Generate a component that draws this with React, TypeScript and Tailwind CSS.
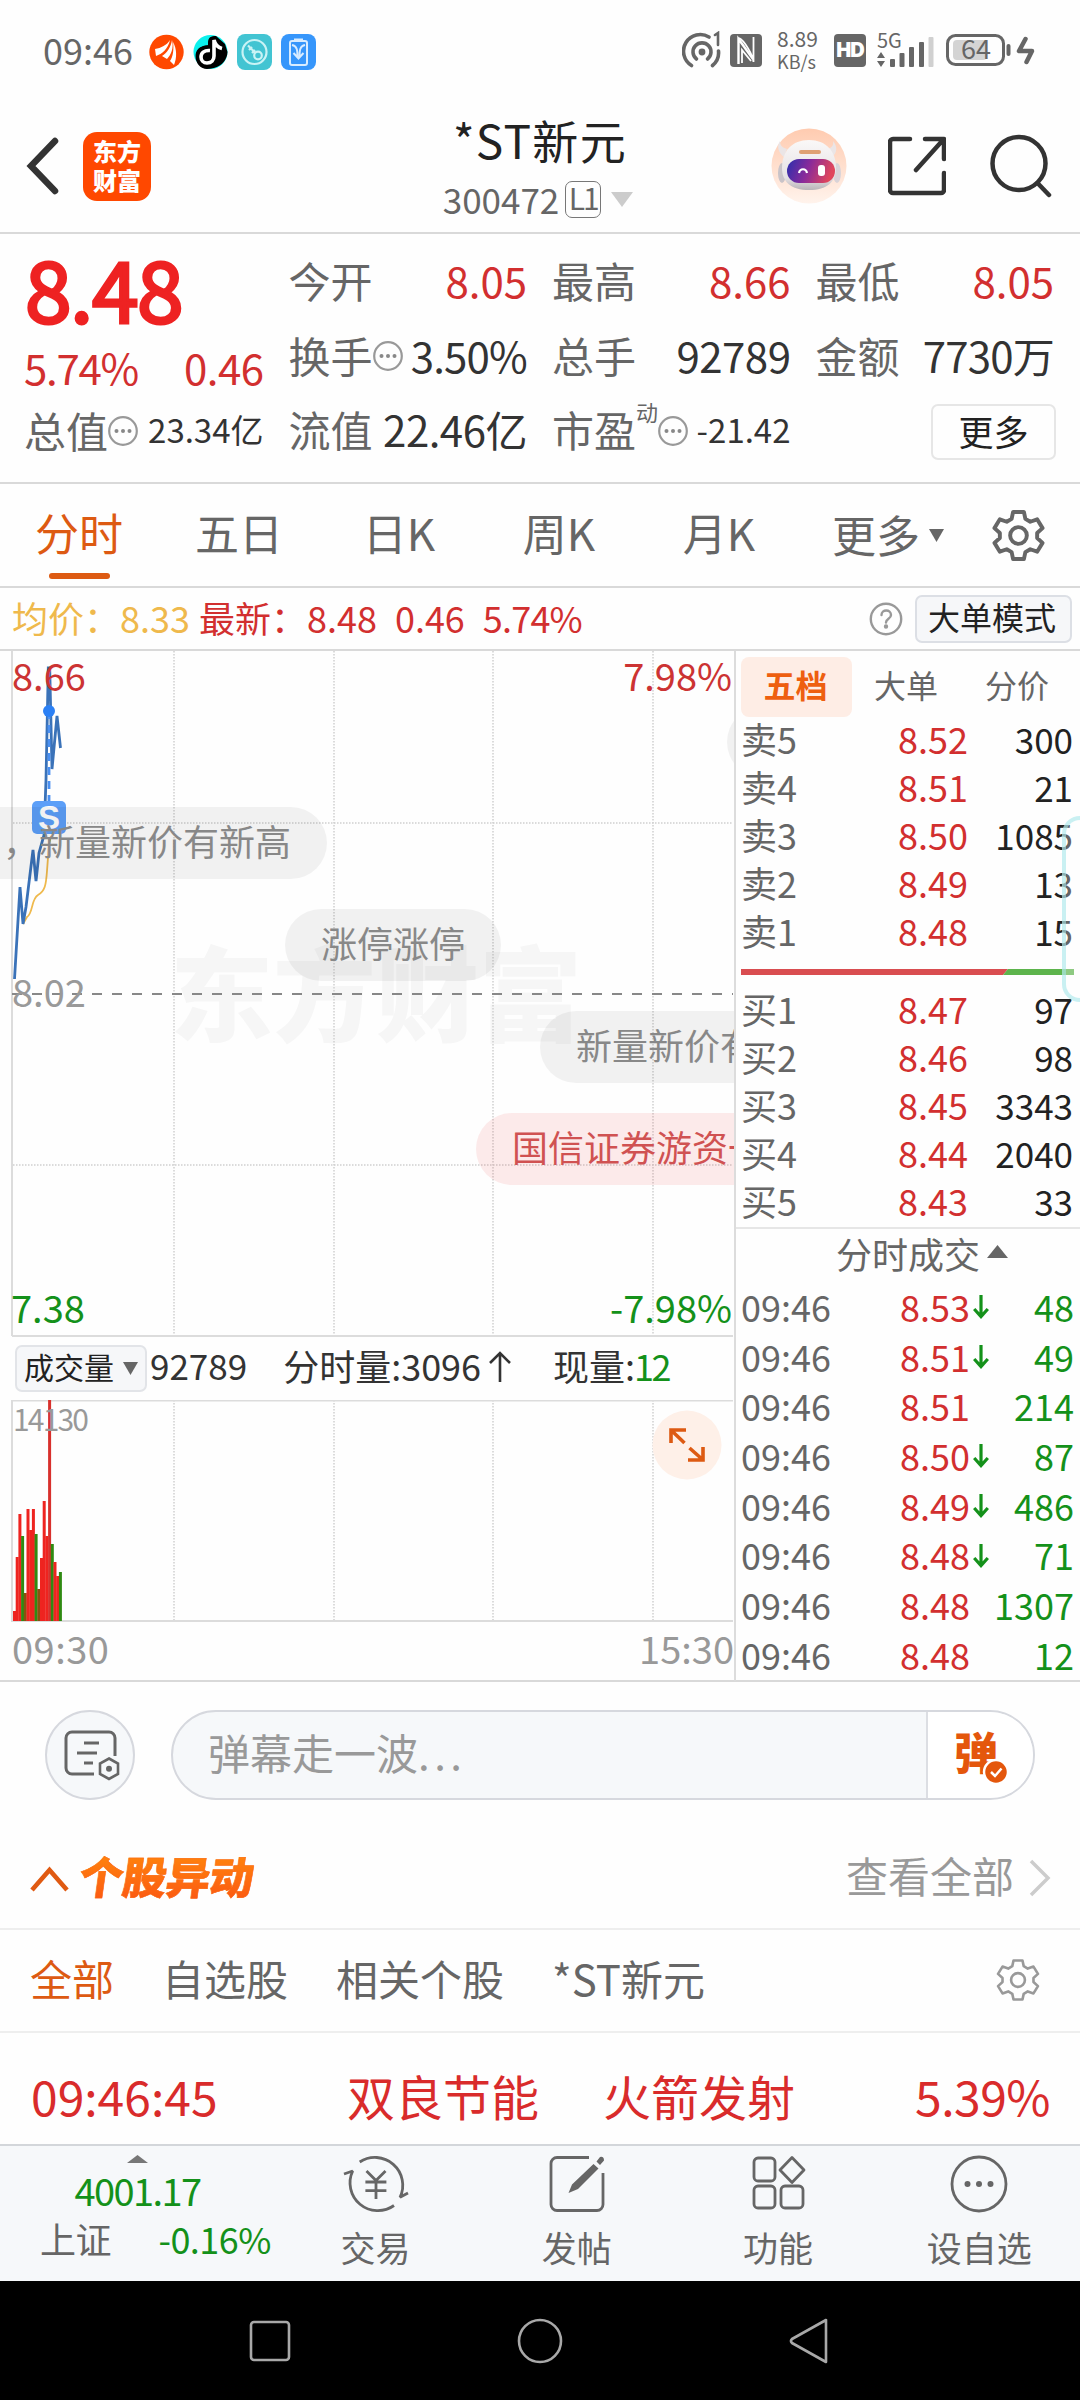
import React from 'react';

type Level = { label: string; price: string; qty: string };
type Tick = { price: string; down: boolean; qty: string };
type VolumeBar = { top: number; color: string };

const sells: Level[] = [
  { label: '卖5', price: '8.52', qty: '300' },
  { label: '卖4', price: '8.51', qty: '21' },
  { label: '卖3', price: '8.50', qty: '1085' },
  { label: '卖2', price: '8.49', qty: '13' },
  { label: '卖1', price: '8.48', qty: '15' },
];

const buys: Level[] = [
  { label: '买1', price: '8.47', qty: '97' },
  { label: '买2', price: '8.46', qty: '98' },
  { label: '买3', price: '8.45', qty: '3343' },
  { label: '买4', price: '8.44', qty: '2040' },
  { label: '买5', price: '8.43', qty: '33' },
];

const ticks: Tick[] = [
  { price: '8.53', down: true, qty: '48' },
  { price: '8.51', down: true, qty: '49' },
  { price: '8.51', down: false, qty: '214' },
  { price: '8.50', down: true, qty: '87' },
  { price: '8.49', down: true, qty: '486' },
  { price: '8.48', down: true, qty: '71' },
  { price: '8.48', down: false, qty: '1307' },
  { price: '8.48', down: false, qty: '12' },
];

const RED = '#ee2420';
const GREEN = '#2f8a12';
const MIXED = '#8a5010';

const volumeBars: VolumeBar[] = [
  { top: 211, color: RED },
  { top: 157, color: RED },
  { top: 114, color: RED },
  { top: 136, color: GREEN },
  { top: 193, color: MIXED },
  { top: 109, color: RED },
  { top: 130, color: RED },
  { top: 109, color: RED },
  { top: 134, color: GREEN },
  { top: 189, color: MIXED },
  { top: 158, color: RED },
  { top: 101, color: RED },
  { top: 136, color: RED },
  { top: 0, color: '#d8302c' },
  { top: 144, color: GREEN },
  { top: 162, color: RED },
  { top: 176, color: RED },
  { top: 172, color: GREEN },
];

const gridX = [174, 334, 493, 653];

const StatusBar: React.FC = () => (
  <div className="flex h-[100px] items-center pl-[43px] pr-[43px] text-[#666]">
    <span className="-mt-[3px] w-[106px] text-[36px] leading-none">09:46</span>
    <div className="mt-[3px] flex items-center gap-[9px]">
      <svg width="35" height="36" viewBox="0 0 35 36">
        <circle cx="17.5" cy="18" r="17.2" fill="#ff4800" />
        <path d="M6 15c6-1 12-4 15-9-2 9-8 14-14 16zM13 22c5-3 9-9 10-16 2 8-1 15-5 19zM21 27c3-4 4-12 3-19 4 7 4 16 1 23z" fill="#fff" />
      </svg>
      <svg width="35" height="36" viewBox="0 0 35 36">
        <circle cx="17.5" cy="18" r="17" fill="#0bf0ec" />
        <path d="M34.500 18A17 17 0 0 1 3 26C1 17 6 11 15 12V9c0-6 3-7 8-7l9 8z" fill="#000" />
        <path d="M16 15c-7 0-9 4-9 8 0 5 3 8 7 8 5 0 7-3 7-8V7c1 4 4 7 8 8" fill="none" stroke="#000" strokeWidth="8" />
        <path d="M17 16.500c-6-.5-9 2.500-9 6.500 0 3.500 2.500 6 6 6 4.500 0 7-3 7-7V6c1 4 4 7.500 8 8.500" fill="none" stroke="#fff" strokeWidth="3.600" />
      </svg>
      <svg width="35" height="36" viewBox="0 0 35 36">
        <rect width="35" height="36" rx="8" fill="#42c4d2" />
        <g fill="none" stroke="#c9f3f5" strokeWidth="2.200">
          <circle cx="17.500" cy="18" r="12" />
          <circle cx="21" cy="21.500" r="3.800" />
          <path d="M18.300 18.800L11 11.500M12 16l3-3M15 19l3-3" />
        </g>
      </svg>
      <svg width="35" height="36" viewBox="0 0 35 36">
        <rect width="35" height="36" rx="8" fill="#3696fb" />
        <g fill="none" stroke="#d8ecff" strokeWidth="2">
          <rect x="9" y="7" width="17" height="24" rx="2" />
          <path d="M13 5.500h9M11 11c5 1 5.500 5 5.500 12M24 11c-5 1-5.500 5-5.500 12M12.500 19l5 5.500 5-5.500" />
        </g>
      </svg>
    </div>

    <div className="ml-auto flex items-center">
      <svg width="40" height="38" viewBox="0 0 40 38" fill="none" stroke="#666" strokeWidth="3.600" strokeLinecap="round">
        <circle cx="20" cy="21" r="3.400" fill="#666" stroke="none" />
        <path d="M14.500 28a9 9 0 1 1 11 0" />
        <path d="M9.500 34.500a16.500 16.500 0 1 1 17.500-28.500M36.500 20a16.500 16.500 0 0 1-6 14.500" />
        <path d="M33 4l3-2v12" strokeWidth="2.600" />
      </svg>
      <svg className="ml-[8px]" width="32" height="33" viewBox="0 0 32 33">
        <rect width="32" height="33" rx="4" fill="#666" />
        <path d="M8.500 30V5l14.500 20" fill="none" stroke="#fff" strokeWidth="2.400" />
        <path d="M9 4c5 2 14 17 14.500 24V3M12 29V16l9 11" fill="none" stroke="#fff" strokeWidth="1.800" />
      </svg>
      <div className="ml-[15px] flex w-[44px] flex-col leading-none">
        <span className="-mt-[3px] text-[21px]">8.89</span>
        <span className="mt-[3px] text-[18px]">KB/s</span>
      </div>
      <div className="ml-[13px] flex h-[33px] w-[32px] items-center justify-center rounded-[4px] bg-[#666] text-[20px] font-black tracking-[-1px] text-white">
        <span className="font-['Inter']">HD</span>
      </div>
      <svg className="ml-[10px]" width="60" height="36" viewBox="0 0 60 36">
        <text x="1" y="16" fontSize="20" fill="#666">5G</text>
        <path d="M1 26l4-6 4 6zM1 29l4 6 4-6z" fill="#666" />
        <g fill="#666">
          <rect x="14" y="27" width="5" height="8" rx="1" />
          <rect x="23.500" y="21" width="5" height="14" rx="1" />
          <rect x="33" y="15" width="5" height="20" rx="1" />
          <rect x="43" y="10" width="5" height="25" rx="1" />
          <rect x="52.500" y="5" width="5" height="30" rx="1" fill="#d0d0d0" />
        </g>
      </svg>
      <svg className="ml-[9px]" width="92" height="34" viewBox="0 0 92 34">
        <rect x="2.500" y="2.500" width="56" height="29" rx="8" fill="none" stroke="#666" strokeWidth="3" />
        <rect x="8" y="7" width="34" height="20" rx="4" fill="#d4d4d4" />
        <rect x="61.500" y="11" width="4" height="12" rx="2" fill="#666" />
        <text x="31" y="26" fontSize="27" textAnchor="middle" fill="#666">64</text>
        <path d="M80.500 6L74 18h13L81.500 29" fill="none" stroke="#666" strokeWidth="4.500" strokeLinecap="round" strokeLinejoin="round" />
      </svg>
    </div>
  </div>
);

const Header: React.FC = () => (
  <header className="grid h-[134px] grid-cols-[1fr_auto_1fr] items-center border-b-2 border-[#d9d9d9]">
    <div className="flex items-center pl-[26px]">
      <svg width="34" height="58" viewBox="0 0 34 58" fill="none" stroke="#333" strokeWidth="6.500" strokeLinecap="round">
        <path d="M29 4L5 29l24 25" strokeLinejoin="miter" />
      </svg>
      <div className="ml-[23px] flex h-[69px] w-[68px] flex-col items-center justify-center rounded-[14px] bg-[#ff4800] pb-[3px] text-[24px] leading-[29px] font-black text-white">
        <span>东方</span>
        <span>财富</span>
      </div>
    </div>
    <div className="flex flex-col items-center pt-[5px]">
      <h1 className="h-[58px] text-[46px] leading-[56px] tracking-[1.300px] text-[#222]">*ST新元</h1>
      <div className="-ml-[4px] flex h-[58px] items-center pt-[1px] text-[35px] leading-none text-[#666]">
        <span>300472</span>
        <span className="ml-[6px] mt-[2px] flex h-[37px] w-[36px] items-center justify-center rounded-[7px] border border-[#777] text-[30px] tracking-[-2px]">
          <span className="-mt-[4px]">L1</span>
        </span>
        <svg className="ml-[10px] mt-[3px]" width="22" height="15" viewBox="0 0 22 15">
          <path d="M0 0h22L11 15z" fill="#ccc" />
        </svg>
      </div>
    </div>
    <div className="flex items-center justify-end pr-[28px]">
      <svg width="76" height="78" viewBox="0 0 76 78">
        <defs>
          <linearGradient id="halo" x1="0" y1="0" x2="0" y2="1">
            <stop offset="0" stopColor="#ffcbb0" />
            <stop offset="1" stopColor="#fff3ec" />
          </linearGradient>
          <linearGradient id="helmet" x1="0" y1="0" x2="0" y2="1">
            <stop offset="0" stopColor="#faf8f8" />
            <stop offset=".75" stopColor="#e6e2e4" />
            <stop offset="1" stopColor="#b9b4b8" />
          </linearGradient>
          <linearGradient id="visor" x1="0" y1="0" x2="1" y2=".2">
            <stop offset="0" stopColor="#2a2fae" />
            <stop offset=".5" stopColor="#8a2a9a" />
            <stop offset="1" stopColor="#e0465c" />
          </linearGradient>
        </defs>
        <circle cx="38" cy="39" r="37.500" fill="url(#halo)" />
        <path d="M9 14c0 5 3 7 7 8l-3 8c-5-4-8-10-4-16zM62 14c1 5-2 7-5 8l4 8c5-4 6-10 1-16z" fill="#ebe5e6" />
        <ellipse cx="11" cy="46" rx="4" ry="10" fill="#c9c3c8" />
        <ellipse cx="66" cy="46" rx="4" ry="10" fill="#d9d3d8" />
        <path d="M38 13c17 0 27 11 27 28 0 14-9 22-27 22S11 55 11 41c0-17 10-28 27-28z" fill="url(#helmet)" />
        <rect x="28" y="23" width="22" height="4" rx="2" fill="#dfa173" />
        <rect x="16" y="32" width="48" height="24" rx="12" fill="url(#visor)" />
        <path d="M28 46c1-5 7-5 8 0" fill="none" stroke="#fff" strokeWidth="2.200" />
        <rect x="47" y="38" width="7" height="11" rx="3" fill="#fff" />
      </svg>
      <svg className="ml-[41px]" width="58" height="60" viewBox="0 0 58 60" fill="none" stroke="#333" strokeWidth="4.500" strokeLinecap="round" strokeLinejoin="round">
        <path d="M22 3H5a3 3 0 0 0-3 3v48a3 3 0 0 0 3 3h48a3 3 0 0 0 3-3V37M37 3h19v20M55 4L28 34" />
      </svg>
      <svg className="ml-[43px]" width="63" height="64" viewBox="0 0 63 64" fill="none" stroke="#333" strokeWidth="4.500" strokeLinecap="round">
        <circle cx="30" cy="29.500" r="26.500" />
        <path d="M48.500 49L60 61" />
      </svg>
    </div>
  </header>
);

const MoreDots: React.FC = () => (
  <svg className="mt-[3px] shrink-0" width="30" height="32" viewBox="0 0 30 32">
    <circle cx="15" cy="16" r="13.800" fill="none" stroke="#999" strokeWidth="2.200" />
    <g fill="#888">
      <circle cx="8.500" cy="16" r="2" />
      <circle cx="15" cy="16" r="2" />
      <circle cx="21.500" cy="16" r="2" />
    </g>
  </svg>
);

const Metric: React.FC<{ label: string; children: React.ReactNode }> = ({ label, children }) => (
  <div className="flex h-[74.5px] items-center whitespace-nowrap">
    <span className="-ml-[1px] text-[#666]">{label}</span>
    {children}
  </div>
);

const QuoteSummary: React.FC = () => (
  <section className="grid h-[250px] grid-cols-4 gap-[26px] border-b-2 border-[#d9d9d9] px-[26px] pt-[9px] text-[42px] leading-none text-[#333]">
    <div>
      <div className="-ml-[1px] flex h-[88px] items-center text-[84px] tracking-[-1.500px] text-[#ee2222] [-webkit-text-stroke:3px_#ee2222]">8.48</div>
      <div className="-ml-[2px] flex h-[72px] items-center justify-between text-[#d22f2f]">
        <span className="tracking-[-1.300px]">5.74%</span>
        <span className="tracking-[-0.500px]">0.46</span>
      </div>
      <div className="flex h-[53px] items-center whitespace-nowrap">
        <span className="-ml-[2px] text-[#666]">总值</span>
        <MoreDots />
        <span className="ml-auto text-[33px]">23.34亿</span>
      </div>
    </div>
    <div>
      <Metric label="今开"><span className="ml-auto text-[#d22f2f]">8.05</span></Metric>
      <Metric label="换手"><MoreDots /><span className="ml-auto tracking-[-0.800px]">3.50%</span></Metric>
      <Metric label="流值"><span className="ml-auto tracking-[-0.500px]">22.46亿</span></Metric>
    </div>
    <div>
      <Metric label="最高"><span className="ml-auto text-[#d22f2f]">8.66</span></Metric>
      <Metric label="总手"><span className="ml-auto tracking-[-0.500px]">92789</span></Metric>
      <Metric label="市盈">
        <span className="-mt-[36px] text-[22px] text-[#666]">动</span>
        <MoreDots />
        <span className="ml-auto text-[33px]">-21.42</span>
      </Metric>
    </div>
    <div>
      <Metric label="最低"><span className="ml-auto text-[#d22f2f]">8.05</span></Metric>
      <Metric label="金额"><span className="ml-auto tracking-[-0.800px]">7730万</span></Metric>
      <div className="flex h-[74.5px] items-center justify-end">
        <button className="-mr-[2px] mt-[6px] h-[56px] w-[125px] rounded-[7px] border-2 border-[#e6e6e6] pb-[4px] text-[35px] leading-none text-[#222]">更多</button>
      </div>
    </div>
  </section>
);

const Gear: React.FC<{ size: number; color: string; width: number }> = ({ size, color, width }) => (
  <svg width={size} height={size} viewBox="0 0 54 54" fill="none" stroke={color} strokeWidth={width} strokeLinejoin="round">
    <path d="M21.500 3h11l1.500 7 5 3 7-2.500 5.500 9-5.500 5v5l5.500 5-5.500 9-7-2.500-5 3-1.500 7h-11L20 44l-5-3-7 2.500-5.500-9 5.500-5v-5l-5.500-5 5.500-9 7 2.500 5-3z" />
    <circle cx="27" cy="27" r="8.500" />
  </svg>
);

const ChartTabs: React.FC = () => (
  <nav className="flex h-[104px] items-stretch border-b-2 border-[#d9d9d9] text-[44px] leading-[96px] text-[#666]">
    <div className="relative -ml-px w-40 text-center text-[#dd5a12]">
      分时
      <i className="absolute bottom-[7px] left-[50px] h-[6px] w-[61px] rounded-full bg-[#dd5a12]" />
    </div>
    {['五日', '日K', '周K', '月K'].map((tab) => (
      <div key={tab} className="w-40 text-center">{tab}</div>
    ))}
    <div className="ml-[33px] flex items-center">
      <span className="-mt-[3px]">更多</span>
      <svg className="ml-[9px]" width="15" height="13" viewBox="0 0 15 13"><path d="M0 0h15L7.500 13z" fill="#666" /></svg>
    </div>
    <div className="ml-[48px] flex items-center"><Gear size={53} color="#666" width={4} /></div>
  </nav>
);

const AvgLine: React.FC = () => (
  <div className="flex h-[63px] items-center border-b-2 border-[#d9d9d9] pl-[12px] pr-[8px] text-[36px] leading-none text-[#d22f2f]">
    <span className="pb-[4px] text-[#efb94c]">均价：8.33</span>
    <span className="ml-[9px] pb-[4px]">最新：8.48</span>
    <span className="ml-[18px] pb-[4px]">0.46</span>
    <span className="ml-[18px] pb-[4px] tracking-[-0.800px]">5.74%</span>
    <svg className="ml-auto" width="34" height="34" viewBox="0 0 34 34" fill="none" stroke="#999" strokeWidth="2.400" strokeLinecap="round">
      <circle cx="17" cy="17" r="15.200" />
      <path d="M12.500 13c0-6 9.500-6 9.500 0 0 4-5 3.500-5 7.500" />
      <circle cx="17" cy="24.500" r="1" fill="#999" />
    </svg>
    <button className="ml-[12px] h-[48px] w-[157px] rounded-[7px] border-2 border-[#dcdfe5] bg-[#f6f7f9] pr-[3px] pb-[5px] text-[32px] leading-none text-[#222]">大单模式</button>
  </div>
);

const PriceChart: React.FC = () => (
  <div className="relative h-[686px] overflow-hidden">
    <svg width="733" height="686" viewBox="0 651 733 686" className="block">
      <text x="170" y="1034" fontSize="103" fontWeight="900" fill="#f6f6f6">东方财富</text>
      <g stroke="#cfcfcf" strokeWidth="1.500" strokeDasharray="1.500 1.500">
        {gridX.map((x) => <path key={x} d={`M${x} 651V1335`} />)}
        <path d="M13 823H733M13 1165H733" />
      </g>
      <path d="M12 650V1336M12 1336H733" stroke="#dcdcdc" strokeWidth="2" />
      <path d="M12 994H733" stroke="#888" strokeWidth="1.800" strokeDasharray="10 10" />
      <path d="M23 924L27 917C33 914 31 899 38 895S46 885 47 871L49 844 51 836" fill="none" stroke="#efb94c" strokeWidth="1.800" />
      <path d="M14.500 979L20 887 23 924 26 907 33 850 36 881 39 853 44 835 46 780 48.300 668h1.400L52 769 57 716 60.500 748" fill="none" stroke="#3a72b8" strokeWidth="2.800" />
      <path d="M49 711V801" stroke="#4a90f2" strokeWidth="2.800" strokeDasharray="8 6" />
      <circle cx="49" cy="711" r="6" fill="#2b80f5" />
      <rect x="32" y="801" width="34" height="33" rx="5" fill="#5c9ff8" />
      <text x="49" y="829" fontSize="33" textAnchor="middle" fill="#fff" className="font-['Liberation_Sans'] font-bold">S</text>
      <g fontSize="38">
        <text x="12" y="690.500" fill="#cc3333">8.66</text>
        <text x="732" y="690.500" textAnchor="end" fill="#cc3333">7.98%</text>
        <text x="12" y="1007" fill="#999">8.02</text>
        <text x="11" y="1322.500" fill="#14911a">7.38</text>
        <text x="732" y="1322.500" textAnchor="end" fill="#14911a">-7.98%</text>
      </g>
    </svg>
    {/* bullet comments drifting over the chart */}
    <div className="whitespace-nowrap text-[36px] leading-[67px] text-[#888]">
      <div className="absolute top-[156px] left-0 h-[72px] rounded-r-full bg-black/5 pr-[36px] pl-[3px]">，新量新价有新高</div>
      <div className="absolute top-[258px] left-[285px] h-[72px] rounded-full bg-black/5 px-[36px]">涨停涨停</div>
      <div className="absolute top-[360px] left-[540px] h-[72px] rounded-full bg-black/5 px-[36px]">新量新价有新高</div>
      <div className="absolute top-[462px] left-[476px] h-[72px] rounded-full bg-[#ee2222]/9 px-[36px] text-[#d05252]">国信证券游资一直</div>
      <div className="absolute top-[55px] left-[727px] h-[72px] w-[200px] rounded-full bg-black/5" />
    </div>
  </div>
);

const VolumeChart: React.FC = () => (
  <div>
    <div className="flex h-[63px] items-center pl-[15px] text-[36px] leading-none whitespace-nowrap text-[#333]">
      <div className="-mt-[1px] flex h-[47px] w-[132px] items-center justify-center gap-[9px] rounded-[7px] border-2 border-[#e2e4e8] bg-[#f6f7f9] text-[30px] text-[#222]">
        <span className="-mt-[5px]">成交量</span>
        <svg width="15" height="13" viewBox="0 0 15 13"><path d="M0 0h15L7.500 13z" fill="#666" /></svg>
      </div>
      <span className="-mt-[8px] ml-[3px] text-[35px]">92789</span>
      <span className="-mt-[8px] ml-[36px]">分时量:3096</span>
      <svg className="-mt-[3px] ml-[7px]" width="24" height="32" viewBox="0 0 24 32" fill="none" stroke="#333" strokeWidth="2.600">
        <path d="M12 31V2M2 12L12 2l10 10" />
      </svg>
      <span className="-mt-[8px] ml-[41px]">现量:<span className="-ml-[1px] tracking-[-2.500px] text-[#14911a]">12</span></span>
    </div>
    <div className="relative">
      <svg width="733" height="222" viewBox="0 0 733 222" className="block">
        <g stroke="#cfcfcf" strokeWidth="1.500" strokeDasharray="1.500 1.500">
          {gridX.map((x) => <path key={x} d={`M${x} 0V221`} />)}
        </g>
        <path d="M12 0V222M12 .5H733M12 221H733" stroke="#dcdcdc" strokeWidth="2" />
        {volumeBars.map((bar, i) => (
          <rect key={i} x={13 + i * 2.7} y={bar.top} width="3" height={221 - bar.top} fill={bar.color} />
        ))}
        <text x="13" y="31" fontSize="30" fill="#999" textLength="76">14130</text>
      </svg>
      <svg className="absolute top-[10px] left-[652px]" width="70" height="70" viewBox="0 0 70 70">
        <circle cx="35" cy="35" r="34.500" fill="#fef0e8" />
        <path d="M19 33V20h15M19.500 20.500l13 12.500M51 37v13H36M50.500 49.500L37.500 38" fill="none" stroke="#dd5a12" strokeWidth="3.600" />
      </svg>
    </div>
    <div className="flex h-[51px] items-center justify-between pl-[12px] text-[38px] leading-none text-[#999]">
      <span className="tracking-[0.500px]">09:30</span>
      <span>15:30</span>
    </div>
  </div>
);

const LevelRow: React.FC<{ level: Level }> = ({ level }) => (
  <div className="flex h-[48px] items-center text-[36px] leading-none">
    <span className="w-[100px] text-[#666]">{level.label}</span>
    <span className="w-[127px] text-right text-[#d22f2f]">{level.price}</span>
    <span className="w-[105px] text-right text-[35px] text-[#222]">{level.qty}</span>
  </div>
);

const OrderBook: React.FC = () => (
  <aside className="relative h-[1030px] w-[346px] border-l-2 border-[#dcdcdc] pl-[5px]">
    <div className="mt-[6px] flex h-[60px] items-center text-[32px] leading-[55px] text-[#666]">
      <span className="h-[60px] w-[111px] rounded-[8px] bg-[#feede5] pr-[2px] text-center font-bold text-[#ee5f10]">五档</span>
      <span className="ml-[22px] h-[60px]">大单</span>
      <span className="ml-[47px] h-[60px]">分价</span>
    </div>
    <div className="-mt-[3px]">
      {sells.map((level) => <LevelRow key={level.label} level={level} />)}
    </div>
    <svg className="mt-[15px] block" width="333" height="6" viewBox="0 0 333 6">
      <path d="M0 0H267L262 6H0z" fill="#d94d50" />
      <path d="M267 0H333V6H262z" fill="#5db44c" />
    </svg>
    <div className="mt-[9px]">
      {buys.map((level) => <LevelRow key={level.label} level={level} />)}
    </div>
    <div className="-ml-[5px] mt-[3px] flex h-[53px] items-center border-t-2 border-[#e6e6e6] pl-[100px] text-[36px] leading-none text-[#666]">
      <span className="-mt-[4px]">分时成交</span>
      <svg className="-mt-[7px] ml-[7px]" width="21" height="13" viewBox="0 0 21 13"><path d="M0 13h21L10.500 0z" fill="#666" /></svg>
    </div>
    <div className="mt-[1px]">
      {ticks.map((tick, i) => (
        <div key={i} className="flex h-[49.7px] items-center text-[36px] leading-none">
          <span className="w-[100px] text-[#666]">09:46</span>
          <span className="w-[129px] text-right text-[#d22f2f]">{tick.price}</span>
          <span className="flex w-[22px] justify-center">
            {tick.down && (
              <svg className="mt-[2px]" width="16" height="25" viewBox="0 0 16 25" fill="none" stroke="#14911a" strokeWidth="3.200">
                <path d="M8 1v21M1.200 15L8 22.500l6.800-7.500" />
              </svg>
            )}
          </span>
          <span className="w-[82px] text-right text-[#14911a]">{tick.qty}</span>
        </div>
      ))}
    </div>
    <div className="absolute top-[165px] right-0 h-[186px] w-[18px] rounded-l-[20px] border-y-4 border-l-4 border-[#a5e6ea]/60 bg-white/30" />
  </aside>
);

const BarrageBar: React.FC = () => (
  <div className="flex h-[146px] items-center pl-[45px]">
    <div className="flex h-[90px] w-[90px] items-center justify-center rounded-full border-2 border-[#d6d8de] bg-[#f6f8fa]">
      <svg className="ml-[3px] mt-[2px]" width="56" height="54" viewBox="0 0 56 54" fill="none" stroke="#666" strokeWidth="3">
        <path d="M30 45H8a6 6 0 0 1-6-6V9a6 6 0 0 1 6-6h37a6 6 0 0 1 6 6v18" />
        <path d="M20 14h15M13 24h20M20 34h9" />
        <path d="M45 29.500l9 5v10.500l-9 5-9-5V34.500z" strokeWidth="2.600" />
        <circle cx="45" cy="39.700" r="3" fill="#666" stroke="none" />
      </svg>
    </div>
    <div className="ml-[36px] flex h-[90px] w-[864px] overflow-hidden rounded-full border-2 border-[#d6d8de] bg-[#f6f8fa]">
      <div className="flex-1 pl-[35px] text-[42px] leading-[79px] text-[#999]">弹幕走一波<span className="tracking-[4.500px]">...</span></div>
      <div className="relative w-[107px] border-l-2 border-[#dcdee3] bg-white pl-[26px] text-[44px] leading-[78px] font-black text-[#e4570c]">
        弹
        <svg className="absolute top-[46px] left-[54px]" width="28" height="28" viewBox="0 0 28 28">
          <circle cx="14" cy="14" r="12" fill="#e4570c" stroke="#fff" strokeWidth="2.500" />
          <path d="M9 14l4 4 6.500-7.500" fill="none" stroke="#fff" strokeWidth="2.500" />
        </svg>
      </div>
    </div>
  </div>
);

const StockMoves: React.FC = () => (
  <section>
    <div className="flex h-[102px] items-center border-b-2 border-[#eee] pr-[29px] pl-[30px] leading-none">
      <svg className="mt-[1px]" width="39" height="26" viewBox="0 0 39 26" fill="none" stroke="#e05a12" strokeWidth="4.500"><path d="M2 24L19.500 4 37 24" /></svg>
      <h2 className="-mt-[6px] ml-[11px] -skew-x-8 bg-linear-to-b from-[#ff8b0a] to-[#fb5312] bg-clip-text py-[8px] text-[44px] font-black tracking-[-0.500px] text-transparent [-webkit-text-stroke:0.5px_#fb6a10]">个股异动</h2>
      <span className="-mt-[7px] ml-auto text-[42px] text-[#999]">查看全部</span>
      <svg className="ml-[15px]" width="22" height="38" viewBox="0 0 22 38" fill="none" stroke="#ccc" strokeWidth="3.500"><path d="M2 2l17 17L2 36" /></svg>
    </div>
    <div className="flex h-[103px] items-center gap-[48px] border-b-2 border-[#eee] pr-[40px] pl-[30px] text-[42px] leading-none text-[#666]">
      <span className="-mt-[6px] text-[#dd5a12]">全部</span>
      <span className="-mt-[6px]">自选股</span>
      <span className="-mt-[6px]">相关个股</span>
      <span className="-mt-[6px]">*ST新元</span>
      <div className="-mt-[2px] ml-auto"><Gear size={44} color="#999" width={3.2} /></div>
    </div>
    <div className="flex h-[111px] items-center pt-[12px] pr-[30px] pl-[31px] text-[48px] leading-none text-[#d92b2b]">
      <span className="w-[316px]">09:46:45</span>
      <span className="w-[256px]">双良节能</span>
      <span>火箭发射</span>
      <span className="ml-auto tracking-[-0.500px]">5.39%</span>
    </div>
  </section>
);

const NavItem: React.FC<{ label: string; children: React.ReactNode }> = ({ label, children }) => (
  <div className="flex flex-1 flex-col items-center pt-[6px]">
    <svg width="68" height="64" viewBox="0 0 68 64" fill="none" stroke="#666" strokeWidth="2.800">{children}</svg>
    <span className="mt-[13px] text-[35px] leading-none text-[#666]">{label}</span>
  </div>
);

const BottomNav: React.FC = () => (
  <footer className="flex h-[137px] border-t-2 border-[#d3d6da] bg-[#f6f8fa]">
    <div className="flex w-[275px] flex-col items-center leading-none text-[#14911a]">
      <svg className="mt-[9px]" width="21" height="8" viewBox="0 0 21 8"><path d="M0 8h21L10.500 0z" fill="#777" /></svg>
      <span className="mt-[8px] text-[38px] tracking-[-1.600px]">4001.17</span>
      <div className="mt-[11px] ml-[36px] flex w-[231px] justify-between text-[36px] tracking-[-0.500px]">
        <span className="text-[#666]">上证</span>
        <span>-0.16%</span>
      </div>
    </div>
    <NavItem label="交易">
      <path d="M17.700 10A27.800 27.800 0 0 1 58 45.300L66 41M52 53.500A27.800 27.800 0 0 1 10.700 19L2 22" strokeLinejoin="bevel" />
      <path d="M24.500 19L34 28.500 43.500 19M34 28v19M23.400 30h21M23.400 38.700h21" />
    </NavItem>
    <NavItem label="发帖">
      <path d="M46 5.500H14a6 6 0 0 0-6 6v41a6 6 0 0 0 6 6h40a6 6 0 0 0 6-6V21" />
      <path d="M50.500 12l5 4.500-20.500 20.500-9.500 4 3.500-8.500zM57 5q4-1 4 3.500l-4 4.500-3.500-3.500z" fill="#666" stroke="none" />
    </NavItem>
    <NavItem label="功能">
      <rect x="10" y="6" width="21" height="23" rx="4" />
      <path d="M48 5.500L60 18 48 30.500 36 18z" strokeLinejoin="round" />
      <rect x="10" y="34" width="21" height="22" rx="4" />
      <rect x="37" y="34" width="22" height="22" rx="4" />
    </NavItem>
    <NavItem label="设自选">
      <circle cx="34" cy="32" r="27" />
      <g fill="#666" stroke="none">
        <circle cx="22.500" cy="32" r="3" />
        <circle cx="34" cy="32" r="3" />
        <circle cx="45.500" cy="32" r="3" />
      </g>
    </NavItem>
  </footer>
);

const SystemNav: React.FC = () => (
  <div className="flex h-[120px] items-center bg-black pl-[248px]">
    <svg width="44" height="44" viewBox="0 0 44 44" fill="none" stroke="#a8a8a8" strokeWidth="2.600"><rect x="3" y="3" width="38" height="38" rx="3" /></svg>
    <svg className="ml-[225px]" width="46" height="46" viewBox="0 0 46 46" fill="none" stroke="#a8a8a8" strokeWidth="2.600"><circle cx="23" cy="23" r="21" /></svg>
    <svg className="ml-[226px]" width="40" height="48" viewBox="0 0 40 48" fill="none" stroke="#a8a8a8" strokeWidth="2.600" strokeLinejoin="round"><path d="M37 3v42L3 26q-2-2 0-4z" /></svg>
  </div>
);

function App() {
  return (
    <div className="h-[2400px] w-[1080px] overflow-hidden bg-[#fefefe] font-['Noto_Sans_CJK_SC',sans-serif]">
      <StatusBar />
      <Header />
      <QuoteSummary />
      <ChartTabs />
      <AvgLine />
      <div className="flex h-[1031px] border-b-2 border-[#d9d9d9]">
        <div className="w-[734px]">
          <PriceChart />
          <VolumeChart />
        </div>
        <OrderBook />
      </div>
      <BarrageBar />
      <StockMoves />
      <BottomNav />
      <SystemNav />
    </div>
  );
}

export default App;
